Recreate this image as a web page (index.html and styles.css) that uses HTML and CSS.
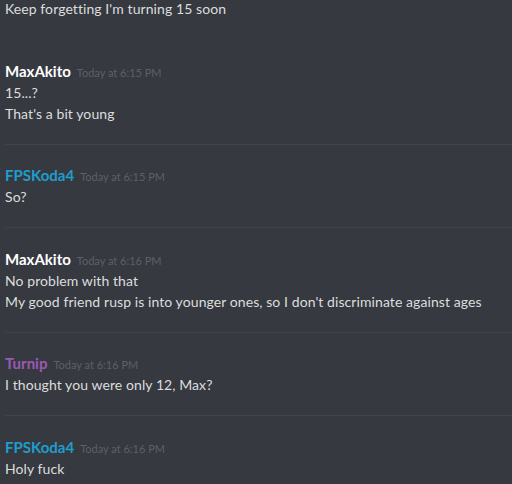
FILE: index.html
```html
<!DOCTYPE html>
<html>
<head>
<meta charset="utf-8">
<link rel="stylesheet" href="styles.css">
</head>
<body>
<div class="chat">
  <div class="group first">
    <div class="msg">Keep forgetting I'm turning 15 soon</div>
  </div>
  <div class="group no-divider">
    <div class="head"><span class="name white">MaxAkito</span><span class="time">Today at 6:15 PM</span></div>
    <div class="msg">15...?</div>
    <div class="msg">That's a bit young</div>
  </div>
  <div class="group">
    <div class="head"><span class="name blue">FPSKoda4</span><span class="time">Today at 6:15 PM</span></div>
    <div class="msg">So?</div>
  </div>
  <div class="group">
    <div class="head"><span class="name white">MaxAkito</span><span class="time">Today at 6:16 PM</span></div>
    <div class="msg">No problem with that</div>
    <div class="msg">My good friend rusp is into younger ones, so I don't discriminate against ages</div>
  </div>
  <div class="group">
    <div class="head"><span class="name purple">Turnip</span><span class="time">Today at 6:16 PM</span></div>
    <div class="msg">I thought you were only 12, Max?</div>
  </div>
  <div class="group">
    <div class="head"><span class="name blue">FPSKoda4</span><span class="time">Today at 6:16 PM</span></div>
    <div class="msg">Holy fuck</div>
  </div>
</div>
</body>
</html>
```

FILE: styles.css
```css
html, body {
  margin: 0;
  padding: 0;
  background: #36393f;
  width: 512px;
  height: 484px;
  overflow: hidden;
}
.chat {
  font-family: Lato, "Liberation Sans", sans-serif;
  color: #dcddde;
  padding-left: 5px;
  margin-top: -2px;
}
.group {
  padding: 20.5px 0 20px;
  border-top: 1px solid #40444b;
}
.group.first {
  padding-top: 0;
  border-top: none;
}
.group.no-divider {
  border-top: 1px solid transparent;
}
.head {
  display: flex;
  align-items: baseline;
  gap: 6px;
  height: 21px;
  line-height: 21px;
}
.name {
  font-size: 15px;
  font-weight: 700;
}
.white { color: #ffffff; }
.blue { color: #1f9dcb; }
.purple { color: #9b59b6; }
.time {
  font-size: 11px;
  color: #5d6067;
}
.msg {
  font-size: 14px;
  line-height: 21px;
  height: 21px;
  white-space: nowrap;
  letter-spacing: 0.08px;
}
```
